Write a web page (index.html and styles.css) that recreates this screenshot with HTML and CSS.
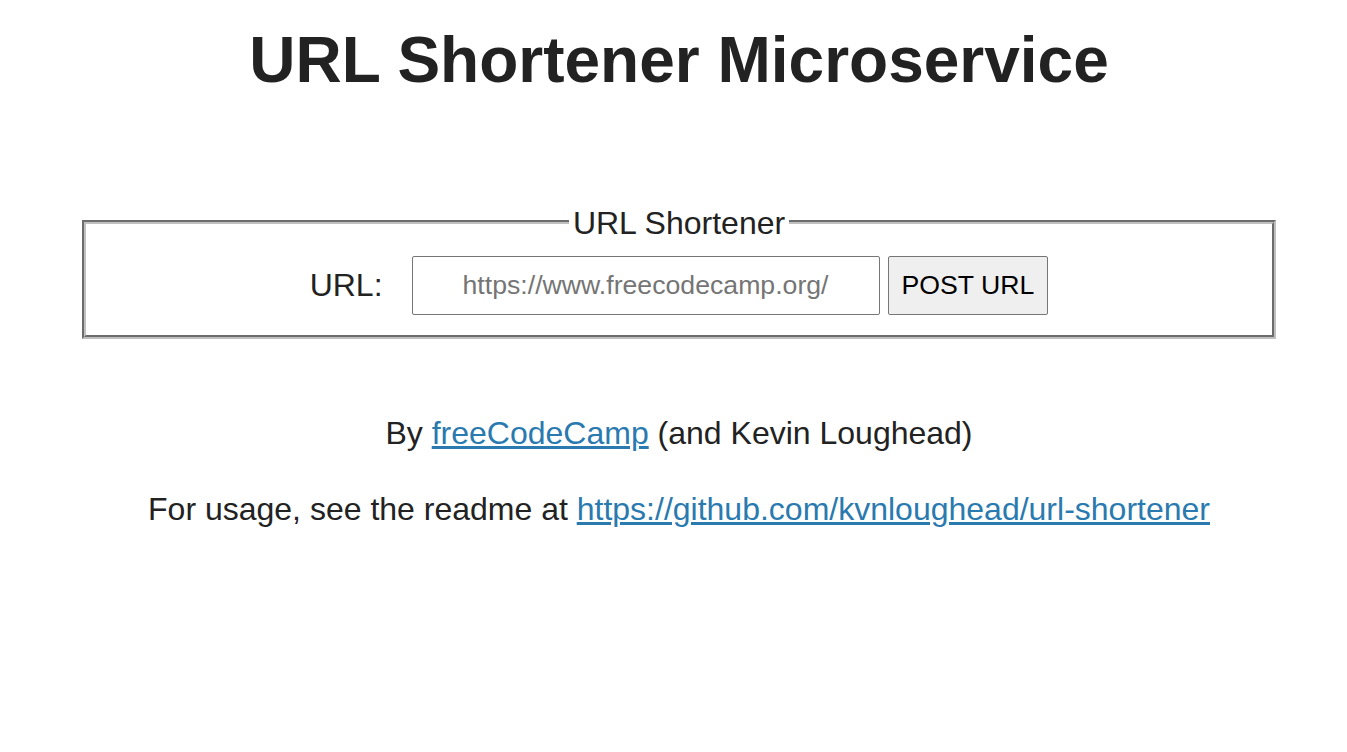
FILE: index.html
```html
<!DOCTYPE html>
<html lang="en">
<head>
<meta charset="utf-8">
<title>URL Shortener Microservice</title>
<link rel="stylesheet" href="styles.css">
</head>
<body>
<div class="container">
  <h1 class="title">URL Shortener Microservice</h1>
  <form class="shortener">
    <fieldset class="panel">
      <legend class="panel-legend">URL Shortener</legend>
      <div class="row">
        <label class="url-label" for="url_input">URL:</label>
        <input class="url-input" id="url_input" type="text" name="url" placeholder="https://www.freecodecamp.org/">
        <button class="post-btn" type="button">POST URL</button>
      </div>
    </fieldset>
  </form>
  <div class="footer">
    <p class="line">By <a class="link" href="#">freeCodeCamp</a> (and Kevin Loughead)</p>
    <p class="line">For usage, see the readme at <a class="link" href="#">https://github.com/kvnloughead/url-shortener</a></p>
  </div>
</div>
</body>
</html>
```
FILE: styles.css
```css
html, body {
  margin: 0;
  padding: 0;
  background: #ffffff;
}

body {
  font-family: "Liberation Sans", Arial, sans-serif;
  color: #222222;
}

.container {
  padding: 0 71px 0 82px;
  text-align: center;
}

.title {
  font-size: 64px;
  font-weight: bold;
  line-height: 74px;
  margin: 23px 0 0;
  color: #222222;
}

.shortener {
  margin: 104px 0 0;
}

.panel {
  margin: 0;
  padding: 14px 0 20px;
  border: 4px groove #c0c0c0;
  min-width: 0;
}

.panel-legend {
  font-size: 32px;
  line-height: 37px;
  padding: 4px 4px 0;
  color: #222222;
}

.row {
  display: flex;
  justify-content: center;
  align-items: center;
}

.url-label {
  font-size: 32px;
  margin-right: 29px;
}

.url-input {
  box-sizing: border-box;
  width: 468px;
  height: 59px;
  border: 1px solid #767676;
  border-radius: 2px;
  font-family: "Liberation Sans", Arial, sans-serif;
  font-size: 26.67px;
  text-align: center;
  padding: 0 8px;
  margin: 0;
  color: #222222;
}

.url-input::placeholder {
  color: #757575;
}

.post-btn {
  box-sizing: border-box;
  height: 59px;
  margin: 0 0 0 8px;
  padding: 0 13px;
  border: 1px solid #767676;
  border-radius: 2px;
  background: #efefef;
  font-family: "Liberation Sans", Arial, sans-serif;
  font-size: 26.67px;
  color: #000000;
}

.footer {
  margin-top: 76px;
}

.line {
  font-size: 32px;
  margin: 0 0 39px;
}

.link {
  color: #2a7ab0;
  text-decoration: underline;
}
```
